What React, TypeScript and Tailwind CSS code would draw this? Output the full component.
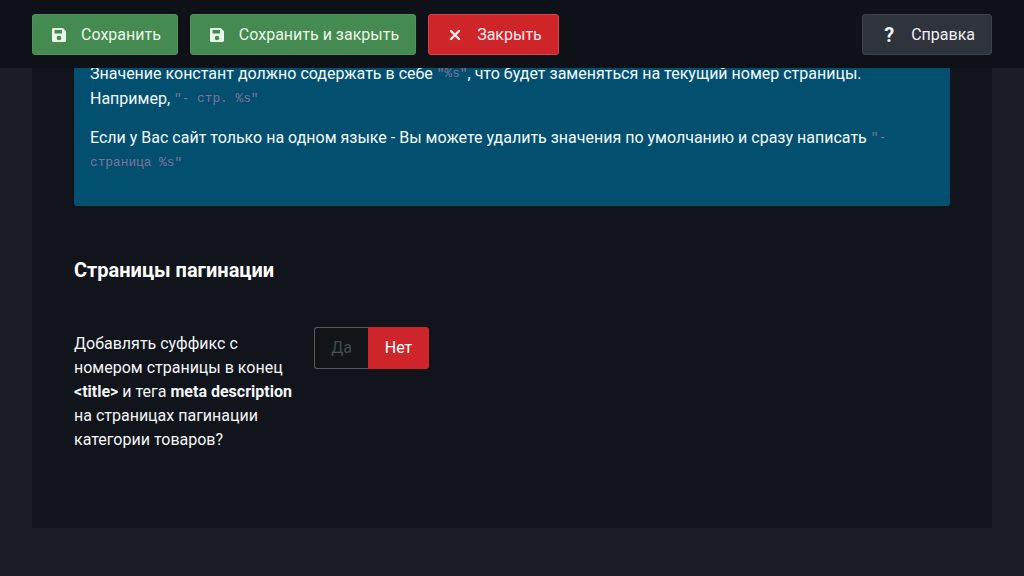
import { X } from 'lucide-react';

function FloppyIcon() {
  return (
    <svg width="16" height="16" viewBox="0 0 16 16" className="shrink-0">
      <path
        fill="currentColor"
        fillRule="evenodd"
        d="M2.200 1h9.600L15 4.200v9.300c0 .8-.7 1.500-1.500 1.500h-11C1.700 15 1 14.300 1 13.500v-11C1 1.700 1.500 1 2.200 1zM3.500 3v3.500h7.500V3H3.500zM8 8.700a2.300 2.300 0 1 0 0 4.600 2.300 2.300 0 0 0 0-4.600z"
      />
    </svg>
  );
}

function ToolbarButton({
  label,
  icon,
  className,
}: {
  label: string;
  icon: React.ReactNode;
  className: string;
}) {
  return (
    <button
      className={`flex h-[41px] items-center gap-[14px] rounded-[3px] border pl-[18px] pr-[16px] text-[16px] leading-6 ${className}`}
    >
      {icon}
      {label}
    </button>
  );
}

const codeClass = 'relative -top-[2px] font-["Liberation_Mono",monospace] text-[12.8px] leading-none text-[#d08ab8] opacity-60';

export default function App() {
  return (
    <div className='flex h-[576px] w-[1024px] flex-col overflow-hidden bg-[#1a1d25] font-["Roboto",sans-serif] text-[16px] leading-6 text-[#f4f6f8]'>
      <header className="relative z-10 flex h-[68px] shrink-0 items-center bg-[#0e1118] px-8 pt-px">
        <div className="flex gap-3">
          <ToolbarButton
            label="Сохранить"
            icon={<FloppyIcon />}
            className="border-[#54915c] bg-[#458a50] text-[#e9f7e9]"
          />
          <ToolbarButton
            label="Сохранить и закрыть"
            icon={<FloppyIcon />}
            className="border-[#54915c] bg-[#458a50] text-[#e9f7e9]"
          />
          <ToolbarButton
            label="Закрыть"
            icon={<X size={16} strokeWidth={3.5} />}
            className="border-[#d84448] bg-[#cd2529] text-[#fdeaea]"
          />
        </div>
        <div className="ml-auto">
          <ToolbarButton
            label="Справка"
            icon={<span className="w-[16px] text-center text-[20px] font-bold">?</span>}
            className="border-[#3e424b] bg-[#2f333c] text-[#eef0f3]"
          />
        </div>
      </header>

      <main className="mx-8 h-[460px] shrink-0 bg-[#11141b] px-[42px]">
        <div className="-mt-[7px] h-[145px] rounded-[3px] border-b border-[#0a5a5e] bg-[#034f70] px-4 text-[#f3fbff]">
          <p className="leading-[25px]">
            Значение констант должно содержать в себе <code className={codeClass}>"%s"</code>, что будет заменяться на текущий номер страницы.
            <br />
            Например, <code className={codeClass}>"- стр. %s"</code>
          </p>
          <p className="mt-[14px] leading-[25px]">
            Если у Вас сайт только на одном языке - Вы можете удалить значения по умолчанию и сразу написать <code className={codeClass}>"- страница %s"</code>
          </p>
        </div>

        <h3 className="mt-[52px] text-[20px] font-bold leading-[24px] text-white">Страницы пагинации</h3>

        <div className="mt-[45px] flex items-start">
          <div className="w-[240px] pr-[20px] pt-[5px]">
            Добавлять суффикс с номером страницы в конец <b>&lt;title&gt;</b> и тега <b>meta description</b> на страницах пагинации категории товаров?
          </div>
          <div className="flex h-[42px]">
            <span className="flex w-[54px] items-center justify-center rounded-l-[3px] border border-r-0 border-[#4f5a5a] bg-[#11151a] text-[#434c4e]">
              Да
            </span>
            <span className="flex w-[61px] items-center justify-center rounded-r-[3px] bg-[#cd2529] text-white">
              Нет
            </span>
          </div>
        </div>
      </main>
    </div>
  );
}
